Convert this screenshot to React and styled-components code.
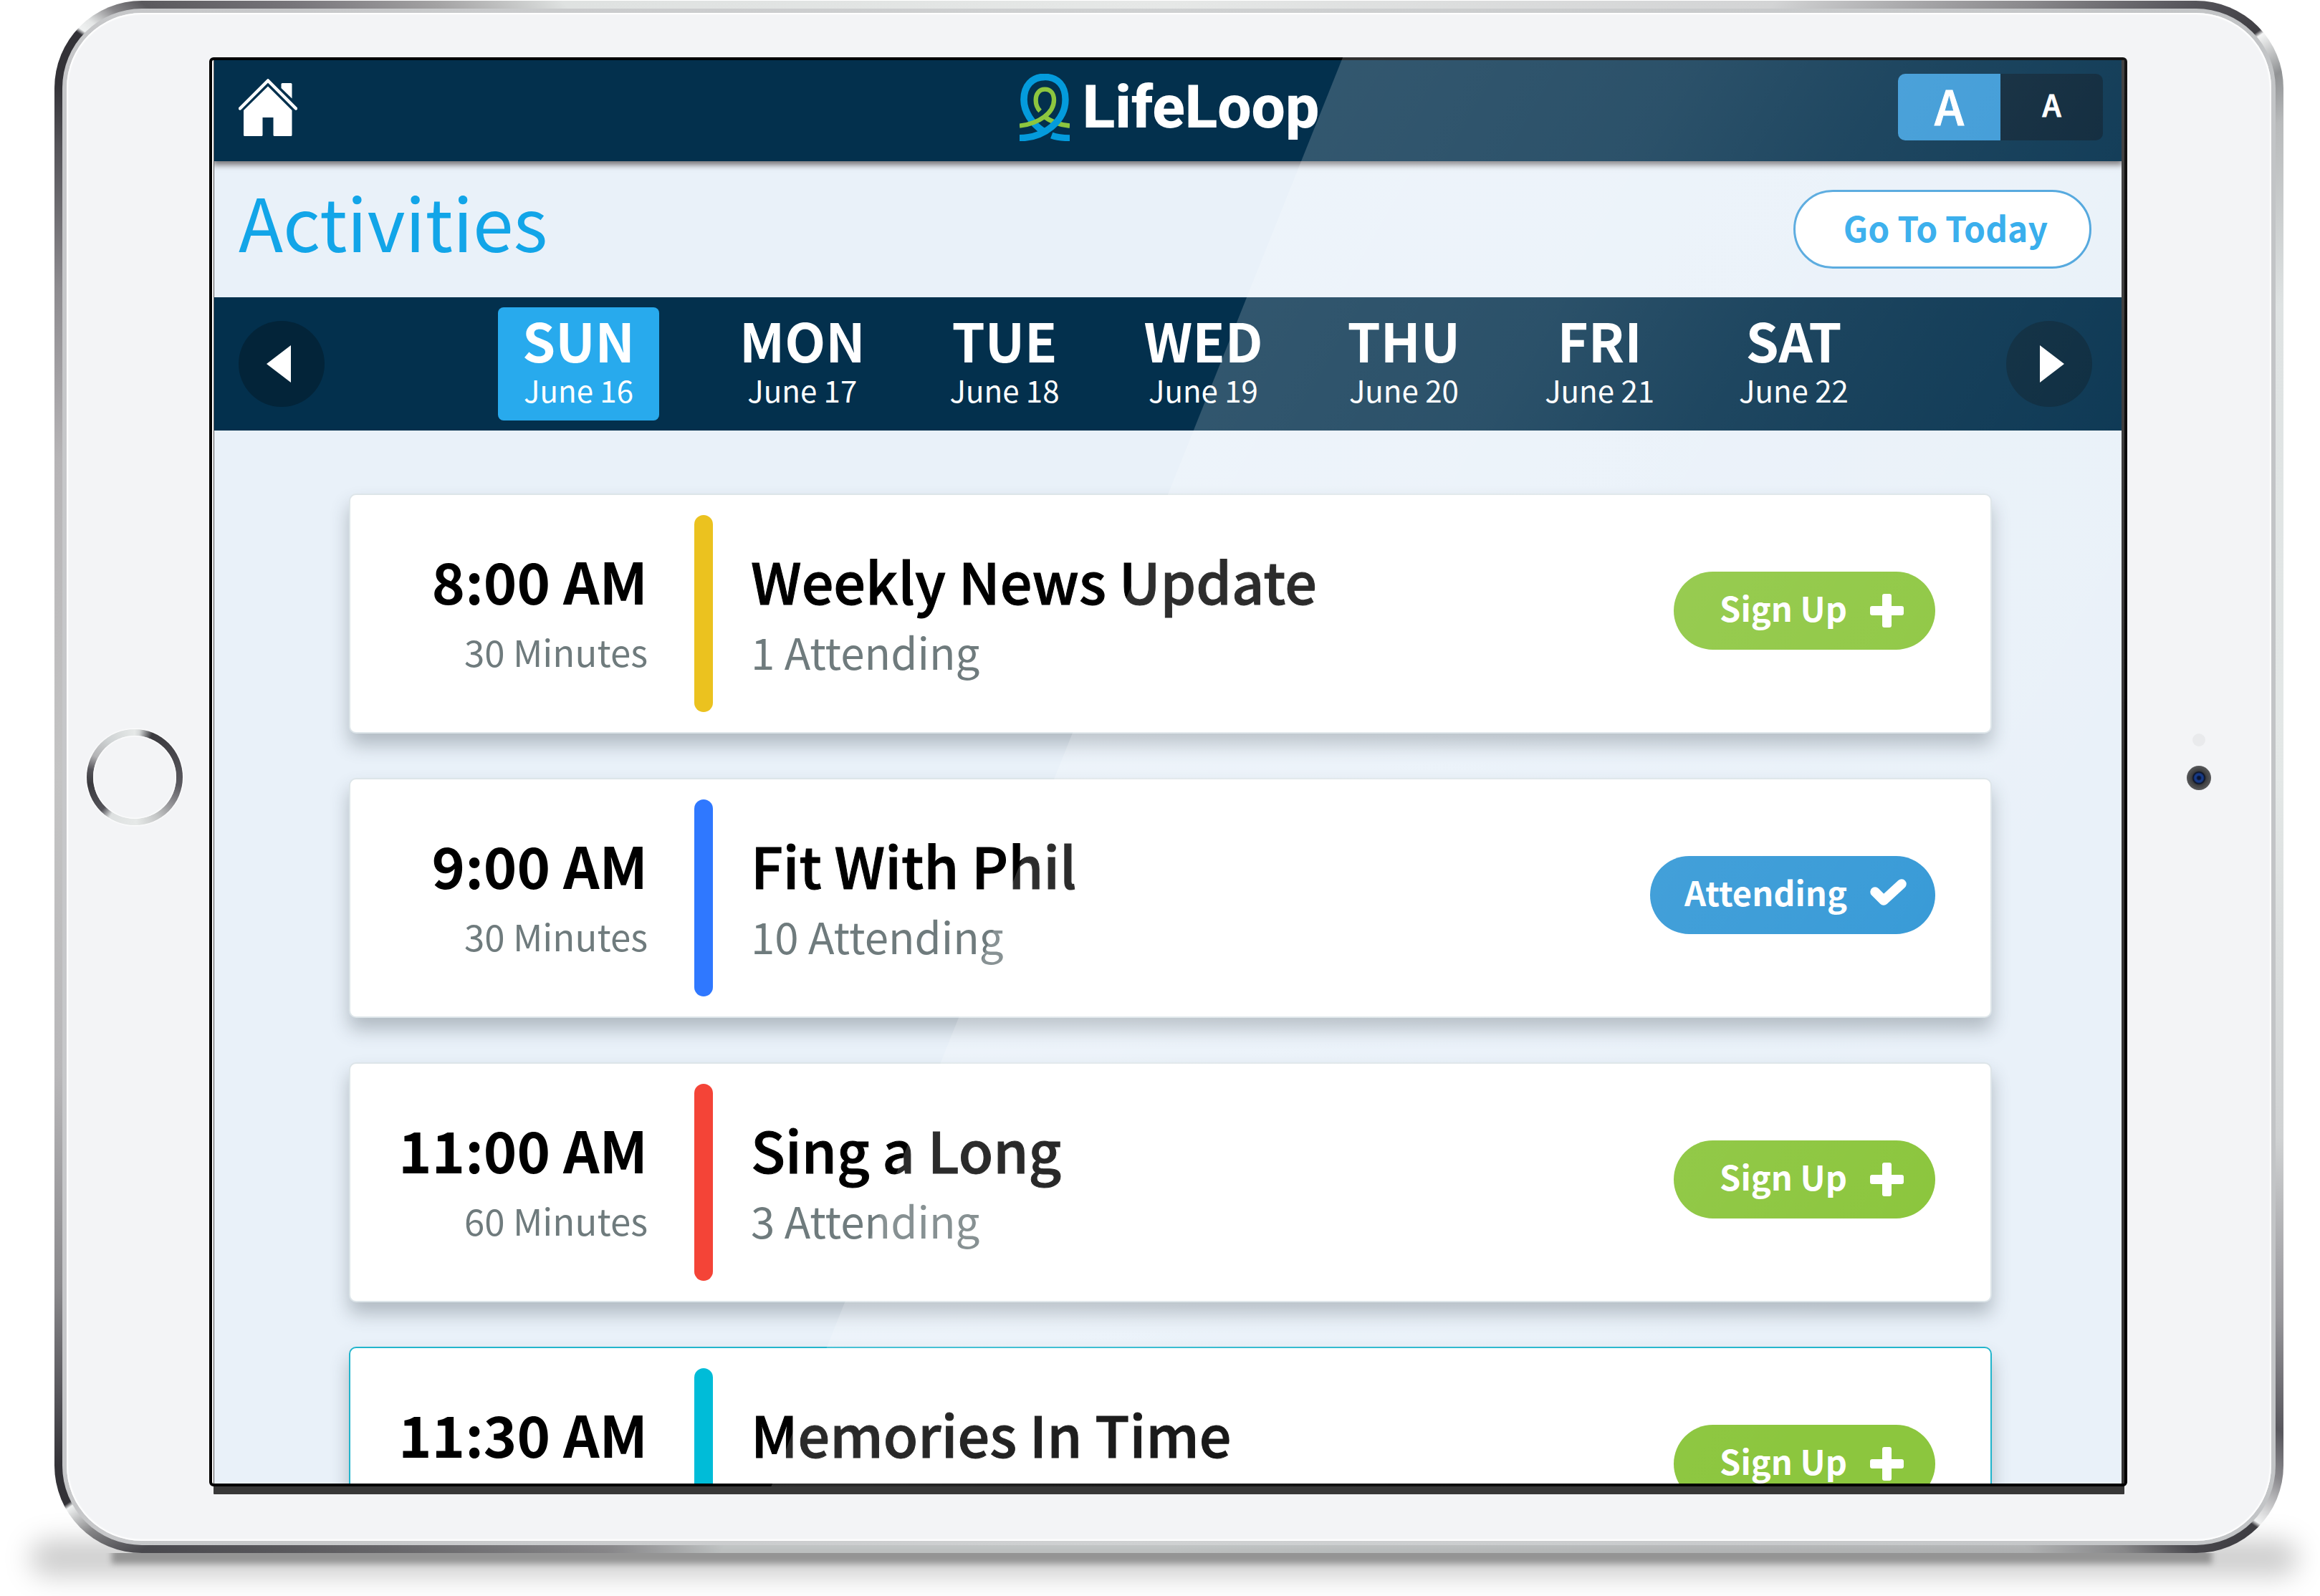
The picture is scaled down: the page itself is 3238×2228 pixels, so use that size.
import React, { useState } from 'react';
import styled, { createGlobalStyle } from 'styled-components';

const GlobalStyle = createGlobalStyle`
  *, *::before, *::after { box-sizing: border-box; }
  html, body { margin: 0; background: #fff; }
  body { font-family: "Noto Sans CJK SC", "Noto Sans", sans-serif; }
  h1, h2, p, ol, ul { margin: 0; padding: 0; font-weight: 400; }
  ol, ul { list-style: none; }
  button { font: inherit; border: 0; padding: 0; cursor: pointer; }
`;

const Page = styled.div`
  height: 100vh;
  padding: 1px 51px 60px 76px;
  overflow: hidden;
`;

/* ---------- tablet ---------- */

const Rim = styled.div`
  position: relative;
  z-index: 0;
  height: 100%;
  padding: 11px;
  border-radius: 122px;
  background: conic-gradient(
    #e6e8e7 0deg, #d3d4d5 38deg, #8a898c 48deg, #55545a 53deg, #3f3e43 55.6deg,
    #f4f5f5 55.8deg, #909294 57.6deg, #b8babb 59.5deg, #dfe3e3 67deg, #e4e8e7 90deg,
    #d0d2d3 108deg, #97969a 116deg, #58575d 120.5deg, #8a898d 122.3deg, #f4f5f5 124.4deg,
    #3f3e43 124.6deg, #55545a 127deg, #a0a0a2 129deg, #cfd1d2 132deg, #dfe3e3 180deg,
    #dfe3e3 210deg, #a09fa2 216deg, #77767a 226deg, #57565c 233deg, #8a8a8c 235deg,
    #f0f2f2 236.4deg, #333237 236.6deg, #333237 238.2deg, #58575c 241deg, #8a898c 245.3deg,
    #b8b7b9 255deg, #c4c4c4 270deg, #b6b4b6 286deg, #8d8b8f 293.8deg, #555459 299.6deg,
    #333237 302deg, #333237 304.3deg, #f0f2f2 304.5deg, #e4e6e6 305deg, #88878a 306deg,
    #5a595d 307deg, #77757a 311.4deg, #a3a2a3 316.5deg, #dfe2e1 322deg, #e6e8e7 360deg
  );

  &::before {
    content: "";
    position: absolute;
    z-index: -2;
    left: -34px;
    right: -20px;
    bottom: -32px;
    height: 50px;
    border-radius: 30px;
    background: rgba(0, 0, 0, 0.2);
    filter: blur(18px);
  }
  &::after {
    content: "";
    position: absolute;
    z-index: -1;
    left: 80px;
    right: 100px;
    bottom: -15px;
    height: 30px;
    background: rgba(0, 0, 0, 0.3);
    filter: blur(4px);
    clip-path: inset(15px -20px -20px -20px);
  }
`;

const Band = styled.div`
  height: 100%;
  padding: 6px;
  border-radius: 111px;
  background: linear-gradient(90deg, #c6c7c9, #cfd1d2 50%, #c2c4c6);
`;

const Face = styled.div`
  height: 100%;
  display: grid;
  grid-template-columns: 199px minmax(0, 1fr) 201px;
  align-items: stretch;
  padding: 62px 0 76px;
  border-radius: 105px;
  background: #f3f4f6;
  box-shadow: inset 0 0 2px 2px #fff;
`;

const HomeKey = styled.button`
  align-self: center;
  justify-self: center;
  display: grid;
  width: 134px;
  height: 134px;
  margin: 14px 10px 0 0;
  padding: 9px;
  border-radius: 50%;
  box-shadow: 0 0 2px 1px #fff;
  background: conic-gradient(
    #e6e9e8 0deg, #d5d8d8 6deg, #3a3a3e 22deg, #47464b 60deg, #5a595f 100deg,
    #8f8e92 125deg, #c4c6c6 150deg, #e6e9e8 178deg, #dde0e0 212deg, #55545a 225deg,
    #3a3a3e 262deg, #55545a 280deg, #b3b3b5 298deg, #cfd3d4 325deg, #e6e9e8 360deg
  );

  &::before {
    content: "";
    border-radius: 50%;
    background: #f3f4f6;
    box-shadow: inset 0 0 2px 1px #fff;
  }
`;

const Optics = styled.div`
  align-self: center;
  justify-self: center;
  display: flex;
  flex-direction: column;
  align-items: center;
  gap: 27px;
  padding: 0 2px 28px 0;
`;

const Sensor = styled.span`
  width: 18px;
  height: 18px;
  border-radius: 50%;
  background: #e9eaec;
`;

const Camera = styled.span`
  width: 34px;
  height: 34px;
  border-radius: 50%;
  background: radial-gradient(circle, #0a1430 0 2px, #173a86 4px 6px, #0d1426 8px, #3c3d3f 10px, #58595b 17px);
`;

const Bezel = styled.div`
  position: relative;
  min-height: 0;
  display: flex;
  padding-left: 2px;
  border: 4px solid #000;
  border-radius: 6px;
  background: #fff;
  box-shadow: 1px 16px 0 -5px #383838;
`;

const Glare = styled.div`
  position: absolute;
  inset: -4px;
  pointer-events: none;
  clip-path: polygon(59.1% 0, 100% 0, 100% 100%, 29.3% 100%);
  background: linear-gradient(
    120deg,
    rgba(255, 255, 255, 0.19) 42%,
    rgba(255, 255, 255, 0.16) 54%,
    rgba(255, 255, 255, 0.11) 62%,
    rgba(255, 255, 255, 0.08) 69%,
    rgba(255, 255, 255, 0.05) 77%,
    rgba(255, 255, 255, 0) 87%
  );
`;

const Screen = styled.div`
  flex: 1;
  min-width: 0;
  display: flex;
  flex-direction: column;
  overflow: hidden;
  border-left: 1px solid #555;
  border-right: 4px solid #333;
  background: #e9f1f9;
`;

/* ---------- app bars ---------- */

const TopBar = styled.header`
  position: relative;
  flex: none;
  display: grid;
  grid-template-columns: 1fr auto 1fr;
  align-items: center;
  height: 141px;
  padding: 0 26px 10px 34px;
  background: #03304d;
  box-shadow: 0 3px 8px 2px rgba(40, 30, 30, 0.6);
`;

const HomeLink = styled.a`
  justify-self: start;
  display: block;
  height: 80px;
  color: #fff;
`;

const Logo = styled.div`
  display: flex;
  align-items: center;
  gap: 18px;
  padding-right: 4px;
  color: #fff;
  font: 800 84px/94px Roboto, "Noto Sans", sans-serif;
`;

const SizeSwitch = styled.div`
  justify-self: end;
  display: flex;
`;

const SizeButton = styled.button`
  width: 143px;
  height: 93px;
  border-radius: ${(p) => (p.$large ? '10px 0 0 10px' : '0 10px 10px 0')};
  padding-bottom: ${(p) => (p.$large ? 8 : 10)}px;
  color: #fff;
  background: ${(p) => (p.$on ? '#3596d5' : '#031f33')};
  font-size: ${(p) => (p.$large ? 66 : 42)}px;
  font-weight: 500;
  line-height: 80px;
  -webkit-text-stroke: 1px currentColor;
`;

const TitleBar = styled.div`
  flex: none;
  display: flex;
  align-items: center;
  justify-content: space-between;
  height: 190px;
  padding: 0 42px 0 34px;
`;

const Heading = styled.h1`
  padding-bottom: 24px;
  color: #12a5e8;
  font-size: 102px;
  line-height: 120px;
`;

const TodayButton = styled.button`
  height: 110px;
  padding: 0 58px 6px 67px;
  border: 3px solid #4aa3dc;
  border-radius: 55px;
  background: #fff;
  color: #29a8eb;
  font-size: 48px;
  font-weight: 700;
  line-height: 60px;
`;

const WeekBar = styled.nav`
  flex: none;
  display: flex;
  align-items: center;
  justify-content: space-between;
  height: 186px;
  padding: 0 41px 0 34px;
  background: #03304d;
`;

const RoundButton = styled.button`
  flex: none;
  display: grid;
  place-items: center;
  width: 120px;
  height: 120px;
  border-radius: 50%;
  background: #032439;
  color: #fff;
`;

const Days = styled.ol`
  display: flex;
  gap: 50px;
`;

const Day = styled.li`
  margin: ${(p) => (p.$active ? '0 28px 0 56px' : '0')};
`;

const DayButton = styled.button`
  display: flex;
  flex-direction: column;
  align-items: center;
  gap: 8px;
  padding: 8px 34px 18px;
  border-radius: 8px;
  background: ${(p) => (p.$active ? '#28aaed' : 'transparent')};
  color: #fff;
`;

const DayName = styled.span`
  font-size: 74px;
  font-weight: 700;
  line-height: 74px;
`;

const DayDate = styled.span`
  font-size: 42px;
  line-height: 50px;
`;

/* ---------- activities ---------- */

const List = styled.ul`
  display: flex;
  flex-direction: column;
  gap: 62px;
  padding: 88px 181px 0 188px;
`;

const Card = styled.li`
  display: grid;
  grid-template-columns: 415px 91px minmax(0, 1fr) auto;
  align-items: center;
  height: 335px;
  padding: 0 77px 0 0;
  border: 2px solid ${(p) => (p.$outline ? p.$outline : '#dde5e9')};
  border-radius: 10px;
  background: #fff;
  box-shadow: 0 16px 26px rgba(60, 70, 80, 0.32);
`;

const Stack = styled.div`
  display: flex;
  flex-direction: column;
  gap: 14px;
  text-align: ${(p) => p.$align};
  padding-left: ${(p) => (p.$align === 'left' ? 53 : 0)}px;
  white-space: nowrap;
`;

const Time = styled.p`
  color: #000;
  font-size: 79px;
  font-weight: 700;
  line-height: 90px;
`;

const Title = styled.h2`
  color: #000;
  font-size: 79px;
  font-weight: 500;
  line-height: 90px;
  -webkit-text-stroke: 1px currentColor;
`;

const Detail = styled.p`
  color: #6f7b7d;
  font-size: ${(p) => (p.$small ? 51 : 60)}px;
  line-height: 80px;
`;

const Stripe = styled.span`
  justify-self: end;
  width: 26px;
  height: 275px;
  border-radius: 13px;
  background: ${(p) => p.$color};
`;

const Action = styled.button`
  display: flex;
  align-items: center;
  gap: 32px;
  height: 109px;
  margin-bottom: 9px;
  padding: ${(p) => (p.$going ? '0 40px 0 48px' : '0 44px 0 64px')};
  border-radius: 55px;
  background: ${(p) => (p.$going ? '#3398d6' : '#8cc63e')};
  color: #fff;
  font-size: 47px;
  font-weight: 700;
  line-height: 60px;
`;

const ActionLabel = styled.span`
  padding-bottom: 9px;
`;

/* ---------- drawings ---------- */

const HouseIcon = () => (
  <svg width="82" height="80" viewBox="0 0 82 80" fill="currentColor" aria-hidden="true">
    <path d="M2 41.500 41 2.500 80 41.500" fill="none" stroke="currentColor" strokeWidth="4.500" strokeLinecap="round" strokeLinejoin="round" />
    <path d="M41 10.500 74.500 44V78.500a1.500 1.500 0 0 1-1.500 1.500H50a1.500 1.500 0 0 1-1.500-1.500V54H33.500V78.500A1.500 1.500 0 0 1 32 80H8.500A1.500 1.500 0 0 1 7 78.500V44Z" />
    <path d="M59.500 7.500A1.500 1.500 0 0 1 61 6H73a1.500 1.500 0 0 1 1.500 1.500V27.500L59.500 13Z" />
  </svg>
);

const LoopMark = () => (
  <svg width="70" height="94" viewBox="0 0 210 282" fill="none" aria-hidden="true">
    <path d="M106 13C52 13 18 50 18 108C18 160 52 208 98 240" stroke="#049bdc" strokeWidth="29" />
    <path d="M134 258C160 268 184 269 210 269" stroke="#049bdc" strokeWidth="27" />
    <path d="M102 178C130 200 170 214 210 218" stroke="#8dc63f" strokeWidth="20" />
    <path d="M0 218C84 208 144 162 144 110C144 82 130 65 106 65C82 65 68 84 68 110C68 130 76 146 86 156" stroke="#8dc63f" strokeWidth="19" />
    <path d="M0 269C104 269 192 196 192 108C192 50 160 13 104 13" stroke="#049bdc" strokeWidth="28" />
  </svg>
);

const Arrow = ({ next }) => (
  <svg width="52" height="52" viewBox="0 0 52 52" fill="currentColor" aria-hidden="true">
    <path d={next ? 'M13 0V52L47 26Z' : 'M39 0V52L5 26Z'} />
  </svg>
);

const PlusIcon = () => (
  <svg width="47" height="47" viewBox="0 0 47 47" fill="currentColor" aria-hidden="true">
    <rect x="17" width="13" height="47" rx="3" />
    <rect y="17" width="47" height="13" rx="3" />
  </svg>
);

const CheckIcon = () => (
  <svg width="51" height="46" viewBox="0 0 51 46" fill="none" aria-hidden="true">
    <path d="M7 19 19 31 44 8" stroke="currentColor" strokeWidth="13.500" strokeLinecap="round" strokeLinejoin="round" />
  </svg>
);

/* ---------- data ---------- */

const DAYS = [
  ['SUN', 'June 16'],
  ['MON', 'June 17'],
  ['TUE', 'June 18'],
  ['WED', 'June 19'],
  ['THU', 'June 20'],
  ['FRI', 'June 21'],
  ['SAT', 'June 22'],
];

const ACTIVITIES = [
  { time: '8:00 AM', length: '30 Minutes', title: 'Weekly News Update', count: '1 Attending', color: '#ebc21f' },
  { time: '9:00 AM', length: '30 Minutes', title: 'Fit With Phil', count: '10 Attending', color: '#2f78ff', going: true },
  { time: '11:00 AM', length: '60 Minutes', title: 'Sing a Long', count: '3 Attending', color: '#f44437' },
  { time: '11:30 AM', title: 'Memories In Time', color: '#00bcd8', outline: '#22b5cc' },
];

function Activity({ item }) {
  return (
    <Card $outline={item.outline}>
      <Stack $align="right">
        <Time>{item.time}</Time>
        <Detail $small>{item.length || '\u00a0'}</Detail>
      </Stack>
      <Stripe $color={item.color} />
      <Stack $align="left">
        <Title>{item.title}</Title>
        <Detail>{item.count || '\u00a0'}</Detail>
      </Stack>
      <Action $going={item.going}>
        <ActionLabel>{item.going ? 'Attending' : 'Sign Up'}</ActionLabel>
        {item.going ? <CheckIcon /> : <PlusIcon />}
      </Action>
    </Card>
  );
}

export default function App() {
  const [day, setDay] = useState(0);
  const [large, setLarge] = useState(true);

  return (
    <Page>
      <GlobalStyle />
      <Rim>
        <Band>
          <Face>
            <HomeKey aria-label="Home button" />
            <Bezel>
              <Screen>
                <TopBar>
                  <HomeLink href="#home" aria-label="Home"><HouseIcon /></HomeLink>
                  <Logo><LoopMark />LifeLoop</Logo>
                  <SizeSwitch role="group" aria-label="Text size">
                    <SizeButton $large $on={large} onClick={() => setLarge(true)}>A</SizeButton>
                    <SizeButton $on={!large} onClick={() => setLarge(false)}>A</SizeButton>
                  </SizeSwitch>
                </TopBar>
                <TitleBar>
                  <Heading>Activities</Heading>
                  <TodayButton onClick={() => setDay(0)}>Go To Today</TodayButton>
                </TitleBar>
                <WeekBar aria-label="Week">
                  <RoundButton aria-label="Previous week"><Arrow /></RoundButton>
                  <Days>
                    {DAYS.map(([name, date], i) => (
                      <Day key={name} $active={i === day}>
                        <DayButton $active={i === day} onClick={() => setDay(i)}>
                          <DayName>{name}</DayName>
                          <DayDate>{date}</DayDate>
                        </DayButton>
                      </Day>
                    ))}
                  </Days>
                  <RoundButton aria-label="Next week"><Arrow next /></RoundButton>
                </WeekBar>
                <List>
                  {ACTIVITIES.map((item) => <Activity key={item.title} item={item} />)}
                </List>
              </Screen>
              <Glare />
            </Bezel>
            <Optics>
              <Sensor />
              <Camera />
            </Optics>
          </Face>
        </Band>
      </Rim>
    </Page>
  );
}
